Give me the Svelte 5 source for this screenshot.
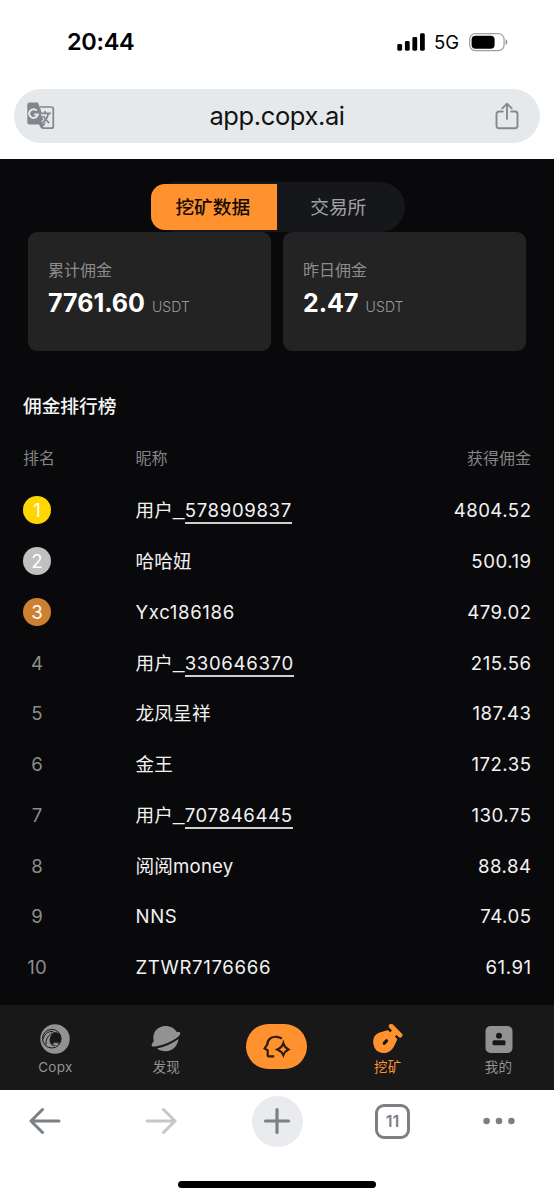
<script lang="ts">
  type Row = { id?: string; name: string; amount: string };

  const stats = [
    { label: '累计佣金', value: '7761.60' },
    { label: '昨日佣金', value: '2.47' },
  ];

  const rows: Row[] = [
    { name: '用户', id: '578909837', amount: '4804.52' },
    { name: '哈哈妞', amount: '500.19' },
    { name: 'Yxc186186', amount: '479.02' },
    { name: '用户', id: '330646370', amount: '215.56' },
    { name: '龙凤呈祥', amount: '187.43' },
    { name: '金王', amount: '172.35' },
    { name: '用户', id: '707846445', amount: '130.75' },
    { name: '阅阅money', amount: '88.84' },
    { name: 'NNS', amount: '74.05' },
    { name: 'ZTWR7176666', amount: '61.91' },
  ];

  const medals = ['gold', 'silver', 'bronze'];

  let tab = $state('mining');

  const isLatin = (text: string) => /^[\w]+$/.test(text);
</script>

<div class="screen">
  <header class="status-bar">
    <span class="time">20:44</span>
    <div class="status-icons">
      <svg width="28" height="18" viewBox="0 0 28 18">
        <rect x="0.3" y="11" width="4.8" height="6.7" rx="1.4" />
        <rect x="7.9" y="8" width="4.8" height="9.7" rx="1.4" />
        <rect x="15.4" y="4" width="4.8" height="13.7" rx="1.4" />
        <rect x="23" y="0.3" width="4.8" height="17.4" rx="1.4" />
      </svg>
      <span class="network">5G</span>
      <svg width="39" height="19" viewBox="0 0 39 19">
        <rect x="0.7" y="0.7" width="34.4" height="17" rx="5.6" fill="none" stroke="#a0a0a0" stroke-width="1.3" />
        <rect x="2.6" y="2.7" width="23" height="13" rx="4" />
        <path d="M36.7 6.3c2.2 1 2.2 4.8 0 5.8z" fill="#8e8e8e" />
      </svg>
    </div>
  </header>

  <div class="address-bar">
    <svg width="28" height="28" viewBox="0 0 28 28">
      <path d="M13 5h11.3a2 2 0 0 1 2 2v17.2a2 2 0 0 1-2 2H16l-3-5.5" fill="none" stroke="#80868b" stroke-width="1.7" />
      <path d="M2.5.4h8.5l1.7 4.6 5.8 16.8-4.3 5-2.2-4.3H2.5A2.2 2.2 0 0 1 .3 20.5v-18A2.2 2.2 0 0 1 2.5.4z" fill="#80868b" />
      <path d="M9.8 8.6a4.4 4.4 0 1 0 1.1 3.8H7.2" fill="none" stroke="#e6e9ec" stroke-width="2" />
      <path d="M14 12.3h8.5M20.7 12.5c-.8 3.5-2.8 6.1-5.6 8.2M16.5 14.5c1 2.2 3 4.7 5.5 6.7" fill="none" stroke="#e6e9ec" stroke-width="3" />
      <path d="M13.2 11.4h10.6M18 9v2.4M21.2 12c-.8 3.7-3.3 7-6.1 8.9M16.5 14c1 2.4 3.2 5 5.6 7.1" fill="none" stroke="#80868b" stroke-width="1.7" />
    </svg>
    <span class="url">app.copx.ai</span>
    <svg width="24" height="28" viewBox="0 0 24 28" fill="none" stroke="#85898c" stroke-width="1.9" stroke-linecap="round" stroke-linejoin="round">
      <path d="M7.8 9.5H4a2.5 2.5 0 0 0-2.5 2.5v11.7A2.5 2.5 0 0 0 4 26.2h16a2.5 2.5 0 0 0 2.5-2.5V12A2.5 2.5 0 0 0 20 9.5h-3.8" />
      <path d="M12 17V1.8M7.3 6.3 12 1.6l4.7 4.7" />
    </svg>
  </div>

  <main>
    <div class="tabs">
      <button class:active={tab === 'mining'} onclick={() => (tab = 'mining')}>挖矿数据</button>
      <button class:active={tab === 'exchange'} onclick={() => (tab = 'exchange')}>交易所</button>
    </div>

    <div class="stats">
      {#each stats as stat (stat.label)}
        <div class="stat-card">
          <div class="stat-label">{stat.label}</div>
          <div class="stat-value">
            <strong>{stat.value}</strong>
            <span>USDT</span>
          </div>
        </div>
      {/each}
    </div>

    <h2>佣金排行榜</h2>
    <div class="table-header">
      <div>排名</div>
      <div>昵称</div>
      <div class="col-amount">获得佣金</div>
    </div>
    {#each rows as row, i (i)}
      <div class="table-row">
        <div class="rank {medals[i] ?? ''}">{i + 1}</div>
        <div class="name" class:latin={isLatin(row.name)}>
          {row.name}{#if row.id}<span class="separator">_</span><span class="linked">{row.id}</span>{/if}
        </div>
        <div class="col-amount amount">{row.amount}</div>
      </div>
    {/each}
  </main>

  <nav class="app-nav">
    <button class="nav-item">
      <svg width="30" height="30" viewBox="0 0 30 30">
        <circle cx="15" cy="15" r="14.7" fill="#929292" />
        <circle cx="11.8" cy="14.7" r="9.3" fill="none" stroke="#181818" stroke-width="1" />
        <path d="M14.5 8.4c3.3-.8 6.5 1.6 6.6 5.6.1 2.3-.8 4.3-2.4 5.700h-6.200c1.3 1.600 3 2 4.600 1.500-3.400 1.800-7.300-.5-7.400-4.700-.1-3.700 1.900-7 4.800-8.100z" fill="#181818" />
        <path d="M3.200 15c.8-4.500 4.600-8 9.800-7.500M6 20.500c-.7-5 2.500-10.500 8.500-12" fill="none" stroke="#181818" stroke-width="1" />
        <path d="M13 18.800h5.800c-1.500 2-4.300 1.900-5.800 0z" fill="#929292" />
      </svg>
      <span>Copx</span>
    </button>
    <button class="nav-item">
      <svg width="30" height="30" viewBox="0 0 30 30" fill="#929292">
        <path d="M2.7 17.200C.9 8.200 6.500 2.300 14.500 2c5 0 9 2.300 11.300 6.100 2.300-.2 3.700.2 3.500 1.400-.3 3-7 7-13.500 9.800C10 21.700 1.400 23.800.7 21.700c-.3-1.200.6-2.800 2-4.500z" />
        <path d="M6 24.400c7.500-1.500 15-5 21.500-9.500-.8 7-6 12.200-12.700 12.300-3.500 0-6.600-1-8.800-2.800z" />
      </svg>
      <span>发现</span>
    </button>
    <button class="ai-button" aria-label="AI">
      <svg width="28" height="23" viewBox="0 0 28 23" fill="none" stroke="#2b1c0e" stroke-width="2.2">
        <path d="M18.8 3.7C16.5 1.7 11 .8 7.6 3.2 4.9 5 4.3 7.5 4.2 9.700L1.600 13.400l3.100 2v4.900q0 1.100 1.100 1.100h5.400" />
        <path d="M20.300 8.300c.8 3.200 1.900 4.400 5.100 6.100-3.100 1.500-4.100 2.900-5.100 5.700-1.200-2.800-2.500-4.100-6-5.600 3.500-1.600 4.900-3 6-6.200z" />
      </svg>
    </button>
    <button class="nav-item selected">
      <svg width="30" height="30" viewBox="0 0 30 30" fill="none" stroke="#ff922e">
        <path d="M14.5 7.500 7 9.600C1.500 12 .7 16.500 1.900 20.800c1.600 6 7 8 12 6.400 3.300-1 5-3.300 6.300-6l2.700-5.700z" fill="#ff922e" stroke-width="2.500" stroke-linejoin="round" />
        <path d="m17 13 5.500-5.500" stroke-width="6.500" />
        <path d="m18.200 2.300 8.900 8.800" stroke-width="4.800" stroke-linecap="round" />
        <path d="m11.300 19.200 2.200-2.400" stroke="#181818" stroke-width="3.200" stroke-linecap="round" />
      </svg>
      <span>挖矿</span>
    </button>
    <button class="nav-item">
      <svg width="30" height="30" viewBox="0 0 30 30">
        <rect x="1.5" y="2" width="27" height="27" rx="5" fill="#929292" />
        <circle cx="15" cy="11.8" r="3" fill="#181818" />
        <rect x="8.5" y="16.2" width="13" height="5" rx="1.500" fill="#181818" />
      </svg>
      <span>我的</span>
    </button>
  </nav>

  <footer class="browser-bar">
    <div class="browser-actions">
      <svg width="32" height="28" viewBox="0 0 32 28" fill="none" stroke="#7b8084" stroke-width="3" stroke-linecap="round" stroke-linejoin="round">
        <path d="M30 14H2M13.5 2.5 2 14l11.5 11.5" />
      </svg>
      <svg width="32" height="28" viewBox="0 0 32 28" fill="none" stroke="#c7c7c7" stroke-width="3" stroke-linecap="round" stroke-linejoin="round">
        <path d="M2 14h28M18.5 2.5 30 14 18.5 25.5" />
      </svg>
      <div class="new-tab">
        <svg width="28" height="28" viewBox="0 0 28 28" fill="none" stroke="#7b8084" stroke-width="3.2" stroke-linecap="round">
          <path d="M14 2.5v23M2.5 14h23" />
        </svg>
      </div>
      <div class="tab-count">11</div>
      <svg width="32" height="8" viewBox="0 0 32 8" fill="#7b8084">
        <circle cx="3.6" cy="4" r="3.3" />
        <circle cx="16" cy="4" r="3.3" />
        <circle cx="28.4" cy="4" r="3.3" />
      </svg>
    </div>
    <div class="home-indicator"></div>
  </footer>
</div>

<style>
  :global(body) {
    background: #fff;
  }

  .screen {
    width: 554px;
    height: 1200px;
    display: flex;
    flex-direction: column;
    overflow: hidden;
    font-family: Inter, 'Noto Sans CJK SC', sans-serif;
    color: #f2f2f2;
  }

  .screen * {
    box-sizing: border-box;
  }

  svg {
    display: block;
    flex: none;
  }

  button {
    border: 0;
    padding: 0;
    background: none;
    font: inherit;
    color: inherit;
  }

  .status-bar {
    height: 89px;
    flex: none;
    display: flex;
    align-items: flex-start;
    justify-content: space-between;
    padding: 27px 46px 0 67px;
    color: #000;
  }

  .time {
    font-size: 23.5px;
    line-height: 30px;
    font-weight: 600;
    letter-spacing: -0.3px;
  }

  .status-icons {
    display: flex;
    align-items: center;
    height: 30px;
  }

  .network {
    margin: 0 10px 0 9px;
    font-size: 18.5px;
  }

  .address-bar {
    height: 54px;
    flex: none;
    margin: 0 14px 16px;
    padding: 0 21px 0 13px;
    display: flex;
    align-items: center;
    justify-content: space-between;
    border-radius: 27px;
    background: #e6e9ec;
    color: #111;
  }

  .url {
    padding: 0 0 1px 4px;
    font-size: 25.5px;
    line-height: 30px;
    letter-spacing: -0.4px;
  }

  main {
    height: 846px;
    flex: none;
    padding: 23px 23px 0;
    background: #09090b;
  }

  .tabs {
    width: 254px;
    height: 50px;
    margin: 0 0 0 128px;
    padding: 2px 0;
    display: flex;
    border-radius: 25px;
    background: #15171b;
    font-size: 18.7px;
    line-height: 46px;
    color: #a3a3a5;
  }

  .tabs button {
    flex: 1;
    padding: 1px 5px 0 0;
  }

  .tabs .active {
    padding-right: 2px;
    border-radius: 14px 0 0 14px;
    background: #ff922e;
    color: #120b04;
    font-weight: 500;
  }

  .stats {
    display: grid;
    grid-template-columns: 1fr 1fr;
    gap: 12px;
    padding: 0 5px;
  }

  .stat-card {
    height: 119px;
    padding: 26px 20px 0;
    border-radius: 9px;
    background: #232323;
  }

  .stat-label {
    font-size: 16px;
    line-height: 24px;
    color: #8c8c8c;
  }

  .stat-value {
    display: flex;
    align-items: baseline;
    gap: 7px;
    line-height: 42px;
    color: #fff;
  }

  .stat-value strong {
    font-size: 25px;
    font-weight: 700;
  }

  .stat-value span {
    font-size: 14px;
    font-weight: 300;
    letter-spacing: 0.1px;
    color: #999;
  }

  h2 {
    margin: 42px 0 16px;
    font-size: 18.7px;
    line-height: 28px;
    font-weight: 500;
    color: #f5f5f5;
  }

  .table-header,
  .table-row {
    display: grid;
    grid-template-columns: 112.5px 1fr auto;
    align-items: center;
    line-height: 28px;
  }

  .table-header {
    height: 42px;
    margin-bottom: 6px;
    font-size: 16px;
    color: #858585;
  }

  .table-row {
    height: 50.75px;
    font-size: 18.6px;
  }

  .col-amount {
    text-align: right;
  }

  .amount {
    margin-right: -0.5px;
    letter-spacing: 0.5px;
  }

  .name {
    letter-spacing: 0.2px;
  }

  .latin,
  .linked {
    letter-spacing: 0.65px;
  }

  .separator {
    font-family: 'Liberation Sans', sans-serif;
    font-size: 20.5px;
    line-height: 1;
    vertical-align: 2px;
  }

  .linked {
    padding-bottom: 1px;
    border-bottom: 2px solid #cfcfcf;
  }

  .rank {
    width: 28px;
    height: 28px;
    border-radius: 50%;
    text-align: center;
    color: #8c8c8c;
  }

  .gold,
  .silver,
  .bronze {
    color: #fff;
  }

  .gold {
    background: #ffd700;
  }

  .silver {
    background: #c0c0c0;
  }

  .bronze {
    background: #cd7f32;
  }

  .app-nav {
    height: 85px;
    flex: none;
    display: grid;
    grid-template-columns: repeat(5, 1fr);
    justify-items: center;
    align-items: start;
    padding-top: 19px;
    background: #181818;
    color: #929292;
  }

  .nav-item {
    display: flex;
    flex-direction: column;
    align-items: center;
    font-size: 13.5px;
    line-height: 26px;
    letter-spacing: 0.3px;
  }

  .selected {
    color: #ff922e;
  }

  .ai-button {
    width: 61px;
    height: 45px;
    display: grid;
    place-items: center;
    border-radius: 23px;
    background: #ff922e;
  }

  .browser-bar {
    height: 110px;
    flex: none;
    background: #fff;
  }

  .browser-actions {
    height: 61px;
    padding-top: 1px;
    display: grid;
    grid-template-columns: 90px 142px 90px 141px 72px;
    align-items: center;
    justify-items: center;
  }

  .new-tab {
    width: 51px;
    height: 51px;
    display: grid;
    place-items: center;
    border-radius: 50%;
    background: #e9ebee;
  }

  .tab-count {
    width: 35px;
    height: 35px;
    border: 3px solid #7b8084;
    border-radius: 9px;
    text-align: center;
    font-size: 16px;
    font-weight: 600;
    line-height: 29px;
    color: #7b8084;
  }

  .home-indicator {
    width: 198px;
    height: 7px;
    margin: 30px auto 0;
    border-radius: 4px;
    background: #000;
  }
</style>
